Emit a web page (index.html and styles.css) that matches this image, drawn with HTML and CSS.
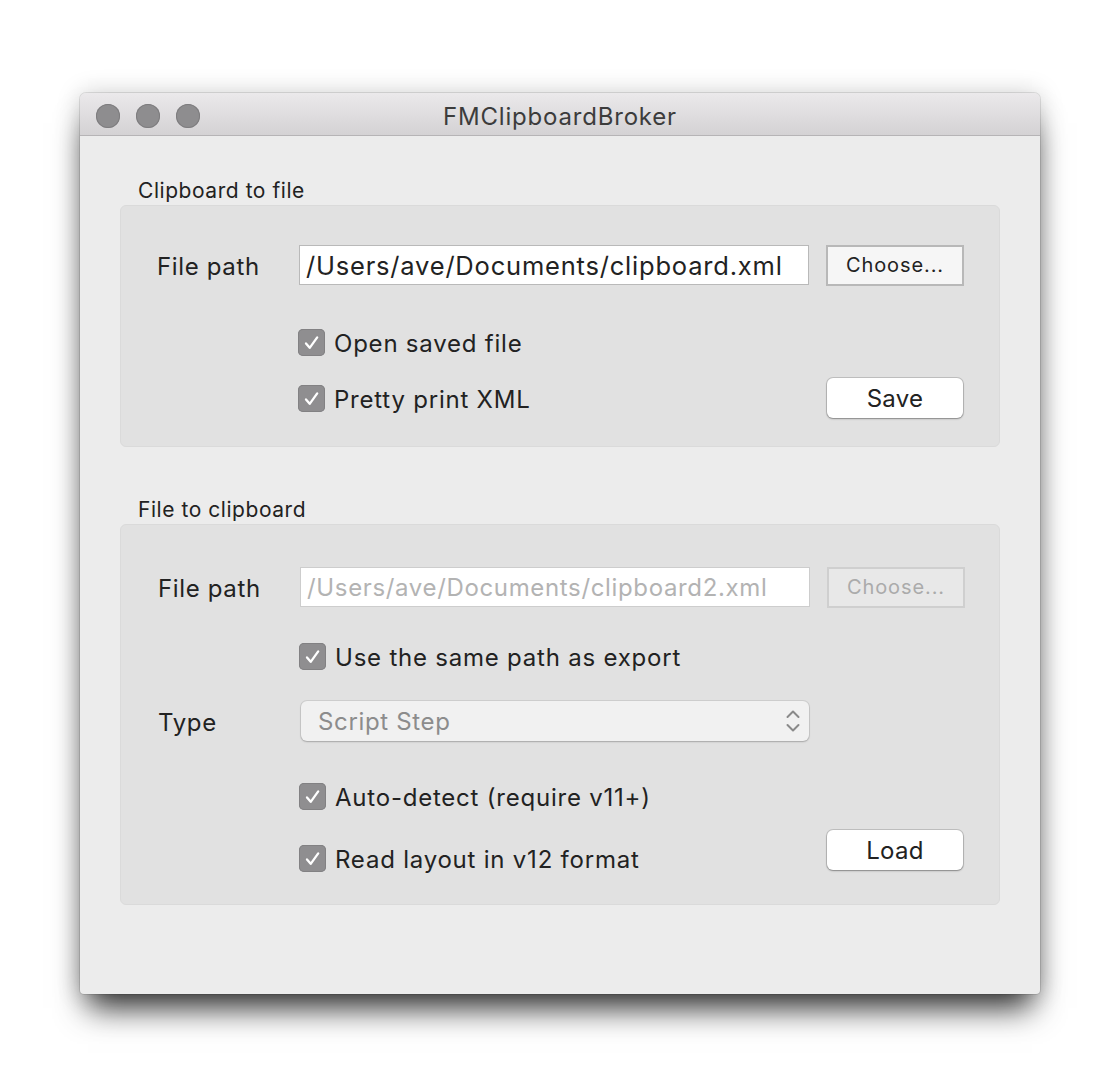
FILE: index.html
```html
<!DOCTYPE html>
<html>
<head>
<meta charset="utf-8">
<link rel="stylesheet" href="styles.css">
</head>
<body>
<div class="window">
  <div class="titlebar">
    <div class="lights"><span class="light"></span><span class="light"></span><span class="light"></span></div>
    <div class="title">FMClipboardBroker</div>
  </div>
  <div class="content">
    <div class="section-label">Clipboard to file</div>
    <div class="group g1">
      <div class="row r-a">
        <div class="label">File path</div>
        <div class="field">/Users/ave/Documents/clipboard.xml</div>
        <div class="btn-square">Choose...</div>
      </div>
      <div class="row r-b">
        <div class="spacer"></div>
        <div class="check"><span class="box"><svg viewBox="0 0 27 27" width="27" height="27"><path d="M8 14.4 L11.7 18.8 L19.2 8.4" fill="none" stroke="#fff" stroke-width="2.3" stroke-linecap="round" stroke-linejoin="round"/></svg></span><span class="txt">Open saved file</span></div>
      </div>
      <div class="row r-c">
        <div class="spacer"></div>
        <div class="check grow"><span class="box"><svg viewBox="0 0 27 27" width="27" height="27"><path d="M8 14.4 L11.7 18.8 L19.2 8.4" fill="none" stroke="#fff" stroke-width="2.3" stroke-linecap="round" stroke-linejoin="round"/></svg></span><span class="txt">Pretty print XML</span></div>
        <div class="btn-push">Save</div>
      </div>
    </div>

    <div class="section-label s2">File to clipboard</div>
    <div class="group g2">
      <div class="row r-a2">
        <div class="label l2">File path</div>
        <div class="field disabled">/Users/ave/Documents/clipboard2.xml</div>
        <div class="btn-square disabled">Choose...</div>
      </div>
      <div class="row r-b2">
        <div class="spacer"></div>
        <div class="check"><span class="box"><svg viewBox="0 0 27 27" width="27" height="27"><path d="M8 14.4 L11.7 18.8 L19.2 8.4" fill="none" stroke="#fff" stroke-width="2.3" stroke-linecap="round" stroke-linejoin="round"/></svg></span><span class="txt">Use the same path as export</span></div>
      </div>
      <div class="row r-c2">
        <div class="label l2">Type</div>
        <div class="select"><span>Script Step</span>
          <svg class="arrows" viewBox="0 0 16 26" width="16" height="26"><path d="M2.5 9 L8 3.5 L13.5 9 M2.5 17 L8 22.5 L13.5 17" fill="none" stroke="#8a8a8a" stroke-width="2" stroke-linecap="round" stroke-linejoin="round"/></svg>
        </div>
      </div>
      <div class="row r-d2">
        <div class="spacer"></div>
        <div class="check"><span class="box"><svg viewBox="0 0 27 27" width="27" height="27"><path d="M8 14.4 L11.7 18.8 L19.2 8.4" fill="none" stroke="#fff" stroke-width="2.3" stroke-linecap="round" stroke-linejoin="round"/></svg></span><span class="txt">Auto-detect (require v11+)</span></div>
      </div>
      <div class="row r-e2">
        <div class="spacer"></div>
        <div class="check grow low"><span class="box"><svg viewBox="0 0 27 27" width="27" height="27"><path d="M8 14.4 L11.7 18.8 L19.2 8.4" fill="none" stroke="#fff" stroke-width="2.3" stroke-linecap="round" stroke-linejoin="round"/></svg></span><span class="txt">Read layout in v12 format</span></div>
        <div class="btn-push">Load</div>
      </div>
    </div>
  </div>
</div>
</body>
</html>
```
FILE: styles.css
```css
* { box-sizing: border-box; }
html, body { margin: 0; padding: 0; background: #ffffff; }
body {
  padding: 93px 0 93px 80px;
  min-height: 1087px;
  font-family: Inter, "Liberation Sans", Arial, sans-serif;
  color: #222;
}
.window {
  width: 960px;
  height: 901px;
  background: #ececec;
  border-radius: 6px 6px 4px 4px;
  box-shadow: 0 22px 30px -8px rgba(0,0,0,0.8), 0 0 24px rgba(0,0,0,0.18), 0 0 0 1px rgba(0,0,0,0.1);
  overflow: hidden;
  display: flex;
  flex-direction: column;
}
.titlebar {
  height: 43px;
  background: linear-gradient(#ebe9eb, #d4d2d4);
  border-bottom: 1px solid #b6b4b6;
  display: flex;
  align-items: center;
  position: relative;
  padding-top: 3px;
}
.lights { display: flex; gap: 16px; padding-left: 16px; }
.light {
  width: 24px; height: 24px; border-radius: 50%;
  background: #8e8d8f;
  box-shadow: inset 0 0 0 1px #7e7d7f;
}
.title {
  position: absolute; left: 0; right: 0; top: 0; bottom: 0;
  display: flex; align-items: center; justify-content: center;
  font-size: 24px; letter-spacing: 0.8px; color: #3c3c3c;
  padding-top: 4px;
}
.content { padding: 42px 40px 0 40px; }
.section-label {
  font-size: 21px; letter-spacing: 0.55px; line-height: 24px; height: 24px;
  padding-left: 18px; margin-bottom: 3px;
  padding-top: 1px;
}
.section-label.s2 { margin-top: 50px; margin-bottom: 3px; }
.group {
  background: #e1e1e1;
  border: 1px solid #dadada;
  border-radius: 6px;
  padding: 0 35px 0 36px;
  font-size: 24px;
  letter-spacing: 0.65px;
}
.g1 { padding-top: 39px; padding-bottom: 28px; }
.g2 { padding-top: 42px; padding-bottom: 27px; }
.row { display: flex; align-items: center; height: 40px; }
.row > .label, .check .txt { padding-top: 2px; }
.check .txt { letter-spacing: 0.78px; }
.r-b { margin-top: 37px; }
.r-c { margin-top: 16px; height: 40px; }
.r-b2 { margin-top: 29px; }
.r-c2 { margin-top: 25px; }
.r-d2 { margin-top: 35px; }
.r-e2 { margin-top: 14px; height: 47px; align-items: flex-start; }
.label { width: 142px; flex: none; }
.l2 { padding-left: 1px; }
.spacer { width: 142px; flex: none; }
.field {
  width: 510px; height: 40px; flex: none;
  background: #fff;
  border: 1px solid #b9b9b9;
  padding-left: 6px;
  line-height: 40px;
  font-size: 25.5px;
  letter-spacing: 0.8px;
  white-space: nowrap; overflow: hidden;
}
.field.disabled { color: #b3b3b3; border-color: #cdcdcd; margin-left: 1px; font-size: 24px; letter-spacing: 0.65px; }
.btn-square {
  margin-left: 17px;
  width: 138px; height: 41px; flex: none;
  background: #f6f6f6;
  border: 2px solid #b8b8b8;
  font-size: 20px;
  letter-spacing: 0.9px;
  display: flex; align-items: center; justify-content: center;
}
.btn-square.disabled { background: #e8e8e8; border-color: #cfcfcf; color: #ababab; }
.check { display: flex; align-items: center; gap: 9px; }
.r-b .check, .r-c .check { margin-left: -1px; }
.check.grow { flex: 1; }
.check.low { margin-top: 13px; }
.box {
  width: 27px; height: 27px; flex: none;
  border-radius: 5px;
  background: #8f8e90;
  box-shadow: inset 0 0 0 1px #828183;
  display: block;
}
.box svg { display: block; }
.btn-push {
  width: 136px; height: 40px; flex: none;
  background: #fff;
  border-radius: 6px;
  box-shadow: 0 0 0 1px rgba(0,0,0,0.14), 0 1px 2px rgba(0,0,0,0.3);
  display: flex; align-items: center; justify-content: center;
  margin-right: 1px;
  letter-spacing: 0.3px;
}
.select {
  width: 508px; height: 40px; flex: none;
  margin-left: 2px;
  background: #f1f1f1;
  border-radius: 6px;
  box-shadow: 0 0 0 1px rgba(0,0,0,0.08), 0 1px 2px rgba(0,0,0,0.2);
  color: #8c8c8c;
  display: flex; align-items: center; justify-content: space-between;
  padding: 0 8px 0 17px;
}
.arrows { display: block; }
```
